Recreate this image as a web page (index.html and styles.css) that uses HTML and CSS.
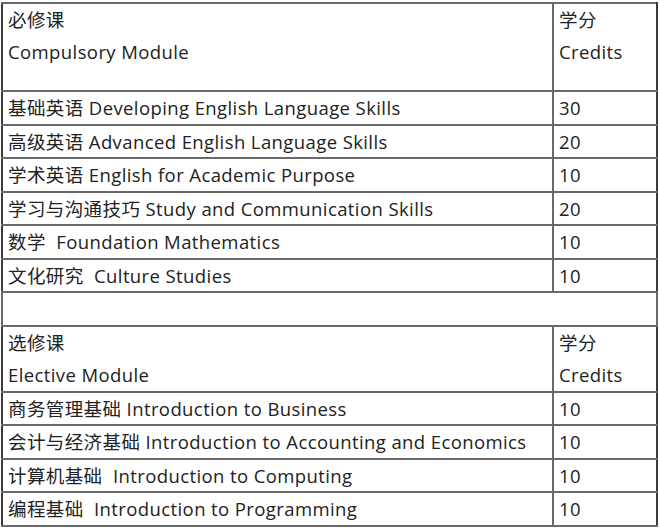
FILE: index.html
```html
<!DOCTYPE html>
<html lang="zh">
<head>
<meta charset="utf-8">
<link rel="stylesheet" href="styles.css">
</head>
<body>
<table class="modules">
  <tr class="head">
    <td class="name"><div>必修课</div><div>Compulsory Module</div><div class="gap"></div></td>
    <td class="credit"><div>学分</div><div>Credits</div><div class="gap"></div></td>
  </tr>
  <tr><td class="name">基础英语 Developing English Language Skills</td><td class="credit">30</td></tr>
  <tr><td class="name">高级英语 Advanced English Language Skills</td><td class="credit">20</td></tr>
  <tr><td class="name">学术英语 English for Academic Purpose</td><td class="credit">10</td></tr>
  <tr><td class="name">学习与沟通技巧 Study and Communication Skills</td><td class="credit">20</td></tr>
  <tr><td class="name">数学&nbsp; Foundation Mathematics</td><td class="credit">10</td></tr>
  <tr><td class="name">文化研究&nbsp; Culture Studies</td><td class="credit">10</td></tr>
  <tr><td class="blank" colspan="2">&nbsp;</td></tr>
  <tr class="head">
    <td class="name"><div>选修课</div><div>Elective Module</div></td>
    <td class="credit"><div>学分</div><div>Credits</div></td>
  </tr>
  <tr><td class="name">商务管理基础 Introduction to Business</td><td class="credit">10</td></tr>
  <tr><td class="name">会计与经济基础 Introduction to Accounting and Economics</td><td class="credit">10</td></tr>
  <tr><td class="name">计算机基础&nbsp; Introduction to Computing</td><td class="credit">10</td></tr>
  <tr><td class="name">编程基础&nbsp; Introduction to Programming</td><td class="credit">10</td></tr>
</table>
</body>
</html>
```
FILE: styles.css
```css
html, body {
  margin: 0;
  padding: 0;
  background: #ffffff;
}
body {
  padding: 2px 0 0 1px;
  font-family: "Open Sans", "Noto Sans CJK SC", sans-serif;
  font-size: 18.5px;
  letter-spacing: 0.4px;
  color: #222222;
}
.modules {
  border-collapse: collapse;
  width: 657px;
  table-layout: fixed;
}
.modules td {
  border: 2px solid #6a6a6a;
  padding: 0 5px;
  height: 31.5px;
  line-height: 31.5px;
  vertical-align: middle;
  white-space: nowrap;
}
.modules td.name {
  width: 539px;
  border-left-color: #3a3a3a;
}
.modules td.credit {
  border-left-color: #3a3a3a;
  border-right-color: #3a3a3a;
}
.modules .head td {
  vertical-align: top;
}
.modules .head td div {
  line-height: 32px;
}
.modules .head td div.gap {
  height: 22px;
}
```
